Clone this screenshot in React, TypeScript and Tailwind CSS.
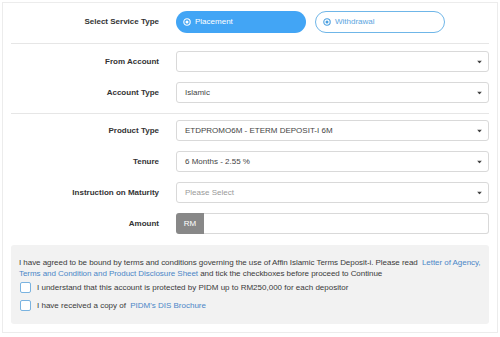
const Caret = () => (
  <svg width="5" height="3" viewBox="0 0 5 3" className="absolute right-[6px] top-1/2 -translate-y-1/2">
    <path d="M0 0h5L2.5 3z" fill="#444" />
  </svg>
);

const RadioDot = ({ color }: { color: string }) => (
  <svg width="8" height="8" viewBox="0 0 8 8">
    <circle cx="4" cy="4" r="3.2" fill="none" stroke={color} strokeWidth="1.1" />
    <circle cx="4" cy="4" r="1.5" fill={color} />
  </svg>
);

const Row = ({ label, children }: { label: string; children: React.ReactNode }) => (
  <div className="grid grid-cols-[148px_1fr] items-center gap-x-[17px]">
    <div className="text-right text-[8px] font-bold text-[#333]">{label}</div>
    <div>{children}</div>
  </div>
);

const Select = ({ value, muted }: { value?: string; muted?: boolean }) => (
  <div className="relative flex h-[21px] items-center rounded-[3px] border border-[#d9d9d9] bg-white px-[8px] text-[8px]">
    <span className={muted ? "text-[#999]" : "text-[#444]"}>{value}</span>
    <Caret />
  </div>
);

const Checkbox = () => (
  <span className="inline-block h-[11px] w-[11px] shrink-0 rounded-[2px] border border-[#7ab3e0] bg-white" />
);

export default function App() {
  return (
    <div className="min-h-[337px] bg-white p-[2px]" style={{ fontFamily: '"Liberation Sans", Arial, sans-serif' }}>
      <div className="border border-[#ececec] bg-white pb-[8px] pl-[8px] pr-[8px] pt-[8px]">
        <Row label="Select Service Type">
          <div className="flex gap-[9px]">
            <div className="flex h-[22px] w-[130px] items-center gap-[4px] rounded-full bg-[#42a5f5] pl-[7px] text-[8px] text-white">
              <RadioDot color="#fff" />
              Placement
            </div>
            <div className="flex h-[22px] w-[130px] items-center gap-[4px] rounded-full border border-[#6fb6e8] bg-white pl-[7px] text-[8px] text-[#5aa5e0]">
              <RadioDot color="#4a9fe0" />
              Withdrawal
            </div>
          </div>
        </Row>
        <div className="mb-[7px] mt-[10px] border-t border-[#e6e6e6]" />
        <div className="flex flex-col gap-[10px]">
          <Row label="From Account">
            <Select />
          </Row>
          <Row label="Account Type">
            <Select value="Islamic" />
          </Row>
        </div>
        <div className="mb-[6px] mt-[10px] border-t border-[#e6e6e6]" />
        <div className="flex flex-col gap-[10px]">
          <Row label="Product Type">
            <Select value="ETDPROMO6M - ETERM DEPOSIT-I 6M" />
          </Row>
          <Row label="Tenure">
            <Select value="6 Months - 2.55 %" />
          </Row>
          <Row label="Instruction on Maturity">
            <Select value="Please Select" muted />
          </Row>
          <Row label="Amount">
            <div className="flex h-[21px]">
              <div className="flex w-[28px] items-center justify-center rounded-l-[3px] bg-[#888] text-[8px] text-white">RM</div>
              <div className="flex-1 rounded-r-[3px] border border-l-0 border-[#d9d9d9] bg-white" />
            </div>
          </Row>
        </div>
        <div className="mt-[11px] rounded-[3px] bg-[#f2f2f2] pb-[13px] pl-[8px] pr-[2px] pt-[12px] text-[8px] leading-[11px] text-[#3a3a3a]">
          <p className="tracking-[-0.05px]">
            I have agreed to be bound by terms and conditions governing the use of Affin Islamic Terms Deposit-i. Please read{" "}
            <span className="pl-[2px] text-[#4a86c7]">Letter of Agency, Terms and Condition and Product Disclosure Sheet</span> and tick the checkboxes before proceed to Continue
          </p>
          <div className="mt-[3px] flex flex-col gap-[7px] pl-[1px]">
            <label className="flex items-center gap-[6px]">
              <Checkbox />
              I understand that this account is protected by PIDM up to RM250,000 for each depositor
            </label>
            <label className="flex items-center gap-[6px]">
              <Checkbox />
              <span>
                I have received a copy of <span className="pl-[2px] text-[#4a86c7]">PIDM's DIS Brochure</span>
              </span>
            </label>
          </div>
        </div>
      </div>
    </div>
  );
}
